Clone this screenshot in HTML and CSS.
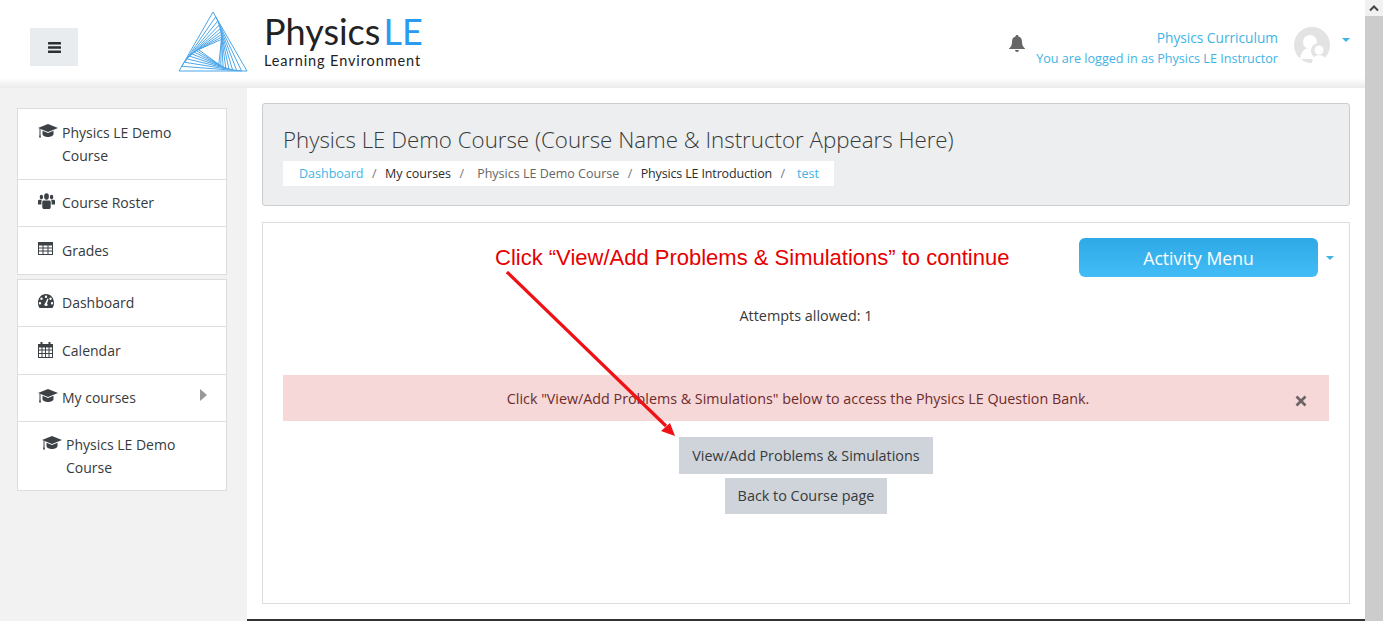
FILE: index.html
```html
<!DOCTYPE html>
<html lang="en">
<head>
    <meta charset="UTF-8">
    <meta name="viewport" content="width=device-width, initial-scale=1.0">
    <title>Physics LE Demo Course</title>
    <link rel="stylesheet" href="styles.css">
</head>

<body>
<svg class="defs" width="0" height="0">
    <defs>
        <g id="cap">
            <path d="M10 0 20 4 10 8 0 4Z"/>
            <path d="M4.500 6.800 10 9 15.500 6.800V10C15.500 11.800 12.500 13 10 13S4.500 11.800 4.500 10Z"/>
            <path d="M1.500 4.800 2.500 5.200V10.500L3 13.500H1L1.500 10.500Z"/>
        </g>
        <polygon id="tri" points="0,-39 34,20 -34,20" vector-effect="non-scaling-stroke"/>
    </defs>
</svg>

<div class="page">
    <div class="content">
        <header class="topbar">
            <button class="menu-toggle" aria-label="Menu">
                <svg width="13" height="11" viewBox="0 0 13 11"><rect width="13" height="2.400" rx=".5"/><rect y="4.300" width="13" height="2.400" rx=".5"/><rect y="8.600" width="13" height="2.400" rx=".5"/></svg>
            </button>
            <div class="logo">
                <svg class="logo-mark" width="72" height="62" viewBox="-36 -40 72 62">
                    <use href="#tri"/>
                    <use href="#tri" transform="rotate(4.500) scale(.883)"/>
                    <use href="#tri" transform="rotate(9) scale(.779)"/>
                    <use href="#tri" transform="rotate(13.500) scale(.688)"/>
                    <use href="#tri" transform="rotate(18) scale(.607)"/>
                    <use href="#tri" transform="rotate(22.500) scale(.536)"/>
                    <use href="#tri" transform="rotate(27) scale(.473)"/>
                    <use href="#tri" transform="rotate(31.500) scale(.418)"/>
                    <use href="#tri" transform="rotate(36) scale(.369)"/>
                </svg>
                <div class="logo-text">
                    <div class="logo-name">Physics<span>LE</span></div>
                    <div class="logo-sub">Learning Environment</div>
                </div>
            </div>
            <div class="user-area">
                <svg class="bell" width="16" height="17" viewBox="0 0 16 17"><path d="M8 0C9 0 9.500.7 9.500 1.500 12 2 13 4 13 7 13 10 14 12 16 13.500V14H0V13.500C2 12 3 10 3 7 3 4 4 2 6.500 1.500 6.500.7 7 0 8 0Z"/><path d="M6 15H10C10 16.200 9 17 8 17S6 16.200 6 15Z"/></svg>
                <div class="user-text">
                    <div class="user-name">Physics Curriculum</div>
                    <div class="user-role">You are logged in as Physics LE Instructor</div>
                </div>
                <svg class="avatar" width="36" height="36" viewBox="0 0 36 36">
                    <circle cx="18" cy="18" r="18" fill="#e3e3e3"/>
                    <circle cx="16" cy="15" r="7" fill="#fff"/>
                    <path d="M6 32C7 24 11 21 16 21S25 24 26 32Z" fill="#fff"/>
                    <circle cx="25" cy="24" r="8" fill="#e3e3e3"/>
                    <circle cx="25" cy="23" r="4.500" fill="#fff"/>
                    <path d="M18 36C18 31 21 28 25 28S32 31 32 34L26 36Z" fill="#fff"/>
                </svg>
                <span class="caret"></span>
            </div>
        </header>
        <div class="topbar-fade"></div>

        <div class="columns">
            <aside class="sidebar">
                <ul class="nav-block">
                    <li><svg class="ico" viewBox="0 0 20 14"><use href="#cap"/></svg><span>Physics LE Demo Course</span></li>
                    <li>
                        <svg class="ico ico-users" viewBox="0 0 20 14" preserveAspectRatio="none"><circle cx="4" cy="3.500" r="2"/><circle cx="16" cy="3.500" r="2"/><circle cx="10" cy="3" r="2.800"/><path d="M0 10V7C0 6 1 6 2 6H4.500C4 7 4 8 4 10ZM20 10V7C20 6 19 6 18 6H15.500C16 7 16 8 16 10ZM5 12V8C5 6.800 6 6.500 7 6.500H13C14 6.500 15 6.800 15 8V12C15 13.500 14 14 13 14H7C6 14 5 13.500 5 12Z"/></svg>
                        <span>Course Roster</span>
                    </li>
                    <li>
                        <svg class="ico" viewBox="2.500 0 20 14"><path d="M2.500 0H17.500V13H2.500ZM3.500 3.500V5.500H7V3.500ZM8 3.500V5.500H12V3.500ZM13 3.500V5.500H16.500V3.500ZM3.500 6.500V8.500H7V6.500ZM8 6.500V8.500H12V6.500ZM13 6.500V8.500H16.500V6.500ZM3.500 9.500V12H7V9.500ZM8 9.500V12H12V9.500ZM13 9.500V12H16.500V9.500Z" fill-rule="evenodd"/></svg>
                        <span>Grades</span>
                    </li>
                </ul>
                <ul class="nav-block">
                    <li>
                        <svg class="ico" viewBox="2 0 20 14"><path d="M10 0C15 0 18 4 18 9 18 11 17.500 12.500 16.500 14H3.500C2.500 12.500 2 11 2 9 2 4 5 0 10 0ZM10 1.500A1.200 1.200 0 1 0 10 3.900 1.200 1.200 0 1 0 10 1.500ZM5.500 3.500A1.200 1.200 0 1 0 5.500 5.900 1.200 1.200 0 1 0 5.500 3.500ZM14.500 3.500A1.200 1.200 0 1 0 14.500 5.900 1.200 1.200 0 1 0 14.500 3.500ZM4 8A1.200 1.200 0 1 0 4 10.400 1.200 1.200 0 1 0 4 8ZM16 8A1.200 1.200 0 1 0 16 10.400 1.200 1.200 0 1 0 16 8ZM11.500 4.500 9 9.500C8 10 8 12 10 12S12 10.500 11 9.500L12.500 5Z" fill-rule="evenodd"/></svg>
                        <span>Dashboard</span>
                    </li>
                    <li>
                        <svg class="ico ico-tall" viewBox="2.500 0 20 16"><path d="M2.500 2H5V0H7V2H13V0H15V2H17.500V16H2.500ZM3.500 5.500V7.500H6V5.500ZM7 5.500V7.500H9.500V5.500ZM10.500 5.500V7.500H13V5.500ZM14 5.500V7.500H16.500V5.500ZM3.500 8.500V11H6V8.500ZM7 8.500V11H9.500V8.500ZM10.500 8.500V11H13V8.500ZM14 8.500V11H16.500V8.500ZM3.500 12V15H6V12ZM7 12V15H9.500V12ZM10.500 12V15H13V12ZM14 12V15H16.500V12Z" fill-rule="evenodd"/></svg>
                        <span>Calendar</span>
                    </li>
                    <li class="has-arrow">
                        <svg class="ico" viewBox="0 0 20 14"><use href="#cap"/></svg>
                        <span>My courses</span>
                        <i class="nav-arrow"></i>
                    </li>
                    <li class="nav-child"><svg class="ico" viewBox="0 0 20 14"><use href="#cap"/></svg><span>Physics LE Demo Course</span></li>
                </ul>
            </aside>

            <main class="main">
                <section class="page-head">
                    <h1>Physics LE Demo Course (Course Name &amp; Instructor Appears Here)</h1>
                    <ol class="crumbs">
                        <li class="crumb-link">Dashboard</li>
                        <li class="crumb-dark">My courses</li>
                        <li class="crumb-grey">Physics LE Demo Course</li>
                        <li class="crumb-dark crumb-intro">Physics LE Introduction</li>
                        <li class="crumb-link crumb-last">test</li>
                    </ol>
                </section>

                <section class="card">
                    <div class="card-top">
                        <button class="activity-btn">Activity Menu</button>
                        <span class="caret"></span>
                    </div>
                    <p class="attempts">Attempts allowed: 1</p>
                    <div class="alert">
                        <span>Click "View/Add Problems &amp; Simulations" below to access the Physics LE Question Bank.</span>
                        <svg class="alert-close" width="12" height="12" viewBox="0 0 12 12"><path d="M1.500 1.500 10.500 10.500M10.500 1.500 1.500 10.500"/></svg>
                    </div>
                    <div class="actions">
                        <button class="btn">View/Add Problems &amp; Simulations</button>
                        <button class="btn">Back to Course page</button>
                    </div>

                    <div class="note">Click “View/Add Problems &amp; Simulations” to continue</div>
                    <svg class="note-arrow" width="180" height="170" viewBox="0 0 180 170">
                        <path d="M1 1 160 155" fill="none" stroke="#ee1216" stroke-width="3.200"/>
                        <path d="M169 165 155 160 164 152Z" fill="#ee1216"/>
                    </svg>
                </section>
            </main>
        </div>
    </div>
    <div class="scrollbar">
        <div class="scroll-up">
            <svg width="10" height="7" viewBox="0 0 10 7"><path d="M1 5.500 5 1.500 9 5.500" fill="none" stroke="#444" stroke-width="2"/></svg>
        </div>
    </div>
</div>
</body>
</html>
```

FILE: styles.css
```css
* {
    box-sizing: border-box;
    margin: 0;
    padding: 0;
}

html, body {
    height: 100%;
    overflow: hidden;
}

body {
    font-family: "Open Sans", "Noto Sans", sans-serif;
    font-size: 14px;
    color: #373a3c;
    background: white;
}

.defs {
    display: block;
    height: 0;
}

.page {
    display: flex;
    height: 621px;
}

.content {
    flex: 1;
    min-width: 0;
    display: flex;
    flex-direction: column;
}

/* top bar */
.topbar {
    height: 78px;
    display: flex;
    align-items: center;
    padding: 0 15px 0 30px;
    background: white;
}

.topbar-fade {
    height: 10px;
    background: linear-gradient(#fff, #ebebeb);
}

.menu-toggle {
    width: 48px;
    height: 38px;
    margin-top: 16px;
    border: none;
    background: #e9ecef;
    display: flex;
    align-items: center;
    justify-content: center;
}

.menu-toggle svg {
    fill: #2b2f33;
}

.logo {
    display: flex;
    align-items: flex-start;
    margin-left: 99px;
    height: 78px;
}

.logo-mark {
    margin-top: 11px;
    fill: none;
    stroke: #4ba6ea;
    stroke-width: 1;
}

.logo-text {
    margin-left: 15px;
    padding-top: 10px;
}

.logo-name {
    font-family: Lato, sans-serif;
    font-size: 36px;
    line-height: 42px;
    color: #222;
}

.logo-name span {
    color: #2b9af0;
    margin-left: 3px;
}

.logo-sub {
    font-family: Lato, sans-serif;
    font-size: 14.500px;
    line-height: 16px;
    letter-spacing: .9px;
    margin-top: 1px;
    color: #222;
}

.user-area {
    margin-left: auto;
    display: flex;
    align-items: center;
    margin-top: 16px;
}

.bell {
    fill: #666;
    margin-right: 11px;
    margin-bottom: 8px;
}

.user-text {
    text-align: right;
    color: #3fb4e4;
    margin: 2px 16px 0 0;
}

.user-name {
    font-size: 13.700px;
    line-height: 22px;
}

.user-role {
    font-size: 12.600px;
    line-height: 20px;
}

.avatar {
    margin-bottom: 4px;
}

.caret {
    display: inline-block;
    width: 0;
    height: 0;
    margin-left: 12px;
    margin-bottom: 14px;
    border-left: 4px solid transparent;
    border-right: 4px solid transparent;
    border-top: 4px solid #3fb4e4;
}

/* columns */
.columns {
    flex: 1;
    display: flex;
    min-height: 0;
}

.sidebar {
    width: 247px;
    flex-shrink: 0;
    background: #f2f2f2;
    padding: 20px 20px 0 17px;
}

.nav-block {
    list-style: none;
    background: white;
    border: 1px solid #ddd;
    margin-bottom: 4px;
}

.nav-block li {
    display: flex;
    align-items: flex-start;
    padding: 11.750px 20px;
    line-height: 23px;
    border-bottom: 1px solid #ddd;
}

.nav-block li:last-child {
    border-bottom: none;
}

.nav-block li.nav-child {
    padding-top: 10.500px;
    padding-left: 24px;
}

.ico {
    width: 20px;
    height: 14px;
    flex-shrink: 0;
    margin: 3px 4px 0 0;
    fill: #3c4146;
}

.ico-users {
    width: 17px;
    height: 16px;
    margin: 2px 7px 0 0;
}

.ico-tall {
    height: 16px;
    margin-top: 3px;
}

.has-arrow {
    position: relative;
}

.nav-arrow {
    margin-left: auto;
    margin-top: 3px;
    margin-right: -1px;
    width: 0;
    height: 0;
    border-top: 6px solid transparent;
    border-bottom: 6px solid transparent;
    border-left: 7px solid #999;
}

/* main */
.main {
    flex: 1;
    min-width: 0;
    padding: 15px;
    border-bottom: 2px solid #333;
    display: flex;
    flex-direction: column;
    gap: 16px;
}

.page-head {
    height: 103px;
    background: #eceeef;
    border: 1px solid #ccc;
    border-radius: 3px;
    padding: 20px;
}

.page-head h1 {
    font-size: 22.300px;
    font-weight: 300;
    line-height: 32px;
}

.crumbs {
    list-style: none;
    display: inline-flex;
    background: white;
    height: 25px;
    align-items: center;
    margin-top: 5px;
    padding: 0 15px 0 16px;
    font-size: 12.500px;
}

.crumbs li + li::before {
    content: "/";
    color: #777;
    margin: 0 8.500px;
}

.crumb-link {
    color: #3fb4e4;
}

.crumb-dark {
    color: #2d2d2d;
}

.crumb-grey {
    color: #666;
}

.crumb-intro {
    letter-spacing: -.15px;
}

.crumb-grey::before {
    margin-right: 13px !important;
}

.crumb-last::before {
    margin-right: 12px !important;
}

.card {
    position: relative;
    flex: 1;
    background: white;
    border: 1px solid #ddd;
    padding: 15px 20px;
}

.card-top {
    display: flex;
    justify-content: flex-end;
    align-items: center;
    height: 39px;
    margin-right: -5px;
}

.card-top .caret {
    margin-left: 8px;
    margin-bottom: 0;
}

.activity-btn {
    width: 239px;
    height: 39px;
    border: none;
    border-radius: 6px;
    background: linear-gradient(#2fa9e6, #43bdf6);
    color: white;
    font-family: inherit;
    font-size: 17.600px;
}

.attempts {
    text-align: center;
    font-size: 14.400px;
    line-height: 22px;
    margin-top: 28px;
}

.alert {
    position: relative;
    height: 46px;
    margin-top: 47.500px;
    background: #f6d8d8;
    color: #6d2b2b;
    font-size: 14.300px;
    display: flex;
    align-items: center;
    justify-content: center;
    padding: 1px 16px 0 0;
}

.alert-close {
    position: absolute;
    right: 22px;
    top: 20px;
    fill: none;
    stroke: #6b6366;
    stroke-width: 2.600;
}

.actions {
    display: flex;
    flex-direction: column;
    align-items: center;
    gap: 4px;
    margin-top: 16.500px;
}

.btn {
    height: 36.500px;
    padding: 0 13px;
    border: none;
    background: #ced4da;
    color: #373a3c;
    font-family: inherit;
    font-size: 14.400px;
}

/* annotation drawn over the page */
.note {
    position: absolute;
    left: 232px;
    top: 21px;
    font-family: "Liberation Sans", Arial, sans-serif;
    font-size: 22px;
    line-height: 28px;
    color: #e60000;
    white-space: nowrap;
}

.note-arrow {
    position: absolute;
    left: 243px;
    top: 48px;
}

/* scrollbar */
.scrollbar {
    width: 18px;
    flex-shrink: 0;
    background: #ccc;
}

.scroll-up {
    height: 16px;
    background: #f1f1f1;
    display: flex;
    align-items: center;
    justify-content: center;
}
```
